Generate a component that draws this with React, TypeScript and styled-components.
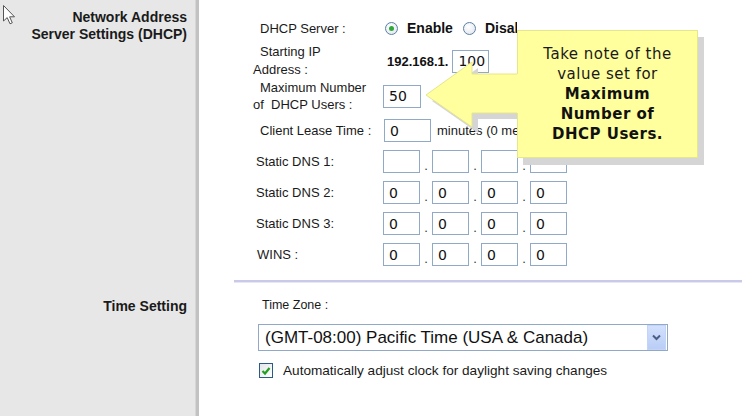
import React from 'react';
import styled, { createGlobalStyle } from 'styled-components';

const GlobalStyle = createGlobalStyle`
    html, body {
        margin: 0;
        padding: 0;
        background: #ffffff;
        overflow: hidden;
    }
    * {
        box-sizing: border-box;
    }
`;

const Page = styled.div`
    position: relative;
    width: 754px;
    height: 416px;
    display: flex;
    flex-direction: column;
    font-family: 'Liberation Sans', Arial, sans-serif;
    color: #111;
    overflow: hidden;
`;

const Section = styled.div<{ $grow?: boolean }>`
    display: flex;
    flex: ${(props) => (props.$grow ? '1' : '0 0 auto')};
`;

const SideCell = styled.div<{ $top: number }>`
    width: 199px;
    flex: 0 0 199px;
    background: #e7e7e7;
    border-right: 3px solid #c2c2c2;
    box-shadow: inset -1px 0 0 #d6d6d6;
    padding: ${(props) => props.$top}px 9px 0 0;
    text-align: right;
    font-weight: bold;
    font-size: 14px;
    line-height: 17px;
    color: #1a1a1a;
`;

const MainCell = styled.div<{ $top: number; $left: number }>`
    flex: 1;
    display: flex;
    flex-direction: column;
    padding: ${(props) => props.$top}px 0 0 ${(props) => props.$left}px;
`;

const Row = styled.div<{ $h: number; $mt?: number }>`
    display: flex;
    align-items: center;
    height: ${(props) => props.$h}px;
    margin-top: ${(props) => props.$mt ?? 0}px;
`;

const Label = styled.div<{ $lh?: number }>`
    width: 130px;
    flex: 0 0 130px;
    font-size: 13px;
    line-height: ${(props) => props.$lh ?? 17}px;
    color: #1a1a1a;
`;

const LabelLine = styled.div<{ $indent?: number }>`
    padding-left: ${(props) => props.$indent ?? 0}px;
    white-space: pre;
`;

const Value = styled.div`
    display: flex;
    align-items: center;
    white-space: nowrap;
`;

const BoldText = styled.span<{ $size?: number; $ml?: number; $clip?: number }>`
    font-weight: bold;
    font-size: ${(props) => props.$size ?? 13}px;
    margin-left: ${(props) => props.$ml ?? 0}px;
    max-width: ${(props) => (props.$clip ? `${props.$clip}px` : 'none')};
    overflow: hidden;
    color: #111;
`;

const PlainText = styled.span<{ $ml?: number; $size?: number; $clip?: number }>`
    font-size: ${(props) => props.$size ?? 13}px;
    margin-left: ${(props) => props.$ml ?? 0}px;
    max-width: ${(props) => (props.$clip ? `${props.$clip}px` : 'none')};
    overflow: hidden;
    white-space: nowrap;
    color: #1a1a1a;
`;

const Radio = styled.span<{ $checked?: boolean; $ml?: number }>`
    position: relative;
    width: 13px;
    height: 13px;
    margin-left: ${(props) => props.$ml ?? 0}px;
    border-radius: 50%;
    border: 1px solid #5b7fa8;
    background: radial-gradient(circle at 40% 35%, #ffffff 0%, #e8ebf0 70%, #cfd6df 100%);
    flex: 0 0 13px;
    &::after {
        content: '';
        display: ${(props) => (props.$checked ? 'block' : 'none')};
        position: absolute;
        left: 3px;
        top: 3px;
        width: 5px;
        height: 5px;
        border-radius: 50%;
        background: #2fa83a;
    }
`;

const TextBox = styled.input<{ $w: number; $ml?: number }>`
    width: ${(props) => props.$w}px;
    height: 23px;
    margin: 0 0 0 ${(props) => props.$ml ?? 0}px;
    padding: 0 0 0 5px;
    border: 1px solid #8fa9c7;
    background: #ffffff;
    font-family: 'DejaVu Sans', Verdana, sans-serif;
    font-size: 14px;
    color: #111;
    outline: none;
`;

const Dot = styled.span`
    width: 12px;
    text-align: center;
    align-self: flex-end;
    font-size: 13px;
    line-height: 14px;
    color: #333;
`;

const Separator = styled.div`
    height: 2px;
    margin: 14px 12px 0 -19px;
    background: #c9c9e9;
    box-shadow: 0 1px 0 #e6e6f4;
`;

const SmallLabel = styled.div`
    font-size: 12.5px;
    line-height: 14px;
    padding-left: 4px;
    color: #1a1a1a;
`;

const Select = styled.div`
    display: flex;
    align-items: center;
    width: 410px;
    height: 27px;
    margin-top: 12px;
    border: 1px solid #8fa9c7;
    background: #ffffff;
`;

const SelectText = styled.span`
    flex: 1;
    padding-left: 6px;
    font-size: 17px;
    color: #111;
`;

const SelectButton = styled.span`
    width: 19px;
    height: 25px;
    margin-right: 1px;
    display: flex;
    align-items: center;
    justify-content: center;
    background: linear-gradient(#d3e0fd, #b9cdf6);
    border: 1px solid #c4d4f8;
`;

const CheckRow = styled.div`
    display: flex;
    align-items: center;
    margin-top: 12px;
    padding-left: 1px;
`;

const CheckBox = styled.span`
    width: 14px;
    height: 15px;
    border: 1px solid #2b5a86;
    background: linear-gradient(135deg, #e4e6ea, #ffffff);
    display: flex;
    align-items: center;
    justify-content: center;
`;

const Callout = styled.div`
    position: absolute;
    left: 517px;
    top: 30px;
    width: 181px;
    height: 128px;
    padding-top: 13px;
    background: #ffff9e;
    border: 1px solid #e6e68c;
    box-shadow: 6px 7px 0 #d5d5d5;
    text-align: center;
    font-family: 'DejaVu Sans', Verdana, sans-serif;
    font-size: 15px;
    line-height: 20px;
    letter-spacing: 0.5px;
    color: #1a1a1a;
`;

const CalloutBold = styled.div`
    font-weight: bold;
    color: #111;
`;

const Overlay = styled.svg<{ $x: number; $y: number }>`
    position: absolute;
    left: ${(props) => props.$x}px;
    top: ${(props) => props.$y}px;
    overflow: visible;
`;

const ARROW = '6,40 52,7 52,19 99,19 99,58 52,58 52,72';
const ARROW_EDGE = '97,19 52,19 52,7 6,40 52,72 52,58 97,58';

const IpFields = ({ values }: { values: string[] }) => (
    <Value>
        {values.map((v, i) => (
            <React.Fragment key={i}>
                {i > 0 && <Dot>.</Dot>}
                <TextBox $w={37} value={v} readOnly />
            </React.Fragment>
        ))}
    </Value>
);

export default function App() {
    return (
        <>
            <GlobalStyle />
            <Page>
                <Section>
                    <SideCell $top={9}>
                        Network Address
                        <br />
                        Server Settings (DHCP)
                    </SideCell>
                    <MainCell $top={17} $left={54}>
                        <Row $h={22}>
                            <Label>
                                <LabelLine $indent={7}>DHCP Server :</LabelLine>
                            </Label>
                            <Value>
                                <Radio $checked $ml={2} />
                                <BoldText $size={14} $ml={9}>Enable</BoldText>
                                <Radio $ml={10} />
                                <BoldText $size={14} $ml={9} $clip={32}>Disable</BoldText>
                            </Value>
                        </Row>
                        <Row $h={36} $mt={4}>
                            <Label $lh={18}>
                                <LabelLine $indent={7}>Starting IP</LabelLine>
                                <LabelLine>Address :</LabelLine>
                            </Label>
                            <Value>
                                <BoldText $ml={4}>192.168.1.</BoldText>
                                <TextBox $w={37} $ml={4} value="100" readOnly />
                            </Value>
                        </Row>
                        <Row $h={34}>
                            <Label>
                                <LabelLine $indent={7}>Maximum Number</LabelLine>
                                <LabelLine>{'of  DHCP Users :'}</LabelLine>
                            </Label>
                            <Value>
                                <TextBox $w={38} value="50" readOnly />
                            </Value>
                        </Row>
                        <Row $h={23} $mt={6}>
                            <Label>
                                <LabelLine $indent={7}>Client Lease Time :</LabelLine>
                            </Label>
                            <Value>
                                <TextBox $w={47} $ml={1} value="0" readOnly />
                                <PlainText $ml={6} $clip={80}>minutes (0 means one day)</PlainText>
                            </Value>
                        </Row>
                        <Row $h={23} $mt={8}>
                            <Label>
                                <LabelLine $indent={3}>Static DNS 1:</LabelLine>
                            </Label>
                            <IpFields values={['', '', '', '']} />
                        </Row>
                        <Row $h={23} $mt={8}>
                            <Label>
                                <LabelLine $indent={3}>Static DNS 2:</LabelLine>
                            </Label>
                            <IpFields values={['0', '0', '0', '0']} />
                        </Row>
                        <Row $h={23} $mt={8}>
                            <Label>
                                <LabelLine $indent={3}>Static DNS 3:</LabelLine>
                            </Label>
                            <IpFields values={['0', '0', '0', '0']} />
                        </Row>
                        <Row $h={23} $mt={8}>
                            <Label>
                                <LabelLine $indent={4}>WINS :</LabelLine>
                            </Label>
                            <IpFields values={['0', '0', '0', '0']} />
                        </Row>
                        <Separator />
                    </MainCell>
                </Section>
                <Section $grow>
                    <SideCell $top={16}>Time Setting</SideCell>
                    <MainCell $top={16} $left={59}>
                        <SmallLabel>Time Zone :</SmallLabel>
                        <Select>
                            <SelectText>(GMT-08:00) Pacific Time (USA &amp; Canada)</SelectText>
                            <SelectButton>
                                <svg width="9" height="7" viewBox="0 0 9 7">
                                    <polyline points="1,1.5 4.5,5 8,1.5" fill="none" stroke="#4b5f86" strokeWidth="2" />
                                </svg>
                            </SelectButton>
                        </Select>
                        <CheckRow>
                            <CheckBox>
                                <svg width="10" height="10" viewBox="0 0 10 10">
                                    <polyline points="1.5,5 4,7.5 8.5,2" fill="none" stroke="#21a121" strokeWidth="2.2" />
                                </svg>
                            </CheckBox>
                            <PlainText $ml={10} $size={13.6}>
                                Automatically adjust clock for daylight saving changes
                            </PlainText>
                        </CheckRow>
                    </MainCell>
                </Section>

                <Overlay $x={426} $y={61} width="110" height="85">
                    <polygon points={ARROW} fill="#d5d5d5" />
                </Overlay>
                <Callout>
                    <div>Take note of the</div>
                    <div>value set for</div>
                    <CalloutBold>Maximum</CalloutBold>
                    <CalloutBold>Number of</CalloutBold>
                    <CalloutBold>DHCP Users.</CalloutBold>
                </Callout>
                <Overlay $x={420} $y={55} width="110" height="85">
                    <polygon points={ARROW} fill="#ffff9e" />
                    <polyline points={ARROW_EDGE} fill="none" stroke="#e6e68c" strokeWidth="1" />
                </Overlay>

                <Overlay $x={3} $y={5} width="13" height="20" viewBox="0 0 13 20">
                    <path d="M0.5 0.5 L0.5 16 L4.2 12.6 L7 18.8 L9.3 17.8 L6.6 11.8 L11.5 11.8 Z" fill="#ffffff" stroke="#555" strokeWidth="1" strokeLinejoin="round" />
                </Overlay>
            </Page>
        </>
    );
}
